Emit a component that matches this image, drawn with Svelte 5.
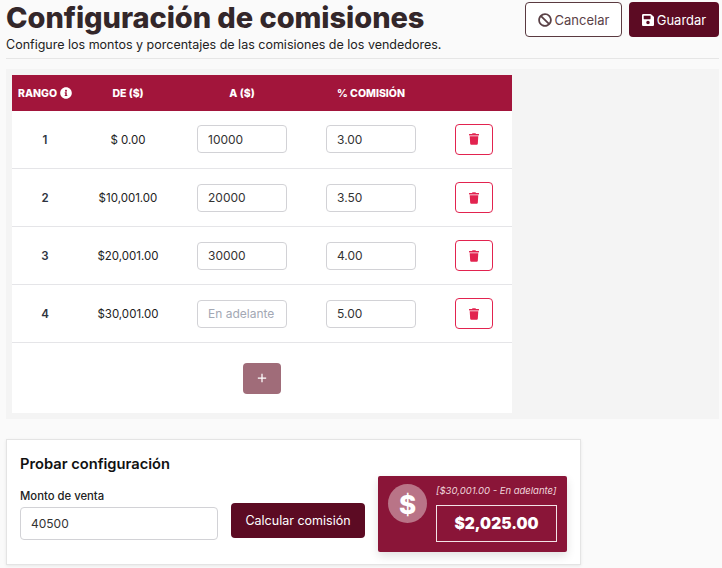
<script>
  const rows = [
    { id: 1, from: '$ 0.00', to: '10000', pct: '3.00' },
    { id: 2, from: '$10,001.00', to: '20000', pct: '3.50' },
    { id: 3, from: '$20,001.00', to: '30000', pct: '4.00' },
    { id: 4, from: '$30,001.00', to: '', pct: '5.00' }
  ];
</script>

<div class="page">
  <header class="head">
    <div class="titles">
      <h1>Configuración de comisiones</h1>
      <p>Configure los montos y porcentajes de las comisiones de los vendedores.</p>
    </div>
    <div class="actions">
      <button class="btn outline">
        <svg viewBox="0 0 512 512" width="14" height="14"><path fill="currentColor" d="M256 8C119 8 8 119 8 256s111 248 248 248 248-111 248-248S393 8 256 8zm130 116c65.500 65.500 70 165 20.100 235.600L152.400 105.900C223 56 322.500 58.500 386 124zM126 388c-65.500-65.500-70-165-20.100-235.600l253.700 253.700C289 456 189.500 453.500 126 388z"/></svg>
        Cancelar
      </button>
      <button class="btn solid">
        <svg viewBox="0 0 448 512" width="12" height="14"><path fill="currentColor" d="M433.900 129.900l-83.900-83.900A48 48 0 0 0 316.100 32H48C21.500 32 0 53.500 0 80v352c0 26.500 21.500 48 48 48h352c26.500 0 48-21.500 48-48V163.900a48 48 0 0 0-14.100-34zM224 416c-35.300 0-64-28.700-64-64s28.700-64 64-64 64 28.700 64 64-28.700 64-64 64zm96-304.500V212c0 6.600-5.400 12-12 12H76c-6.600 0-12-5.400-12-12V108c0-6.600 5.400-12 12-12h228.500c3.200 0 6.200 1.300 8.500 3.500l3.500 3.500c2.300 2.300 3.500 5.300 3.500 8.500z"/></svg>
        Guardar
      </button>
    </div>
  </header>

  <section class="panel">
    <div class="table">
      <div class="row thead">
        <div class="rango">RANGO
          <svg viewBox="0 0 512 512" width="12" height="12"><path fill="currentColor" d="M256 8C119 8 8 119 8 256c0 137 111 248 248 248s248-111 248-248C504 119 393 8 256 8zm0 110c23.200 0 42 18.800 42 42s-18.800 42-42 42-42-18.800-42-42 18.800-42 42-42zm56 254c0 6.600-5.400 12-12 12h-88c-6.600 0-12-5.400-12-12v-24c0-6.600 5.400-12 12-12h12v-64h-12c-6.600 0-12-5.400-12-12v-24c0-6.600 5.400-12 12-12h64c6.600 0 12 5.400 12 12v100h12c6.600 0 12 5.400 12 12v24z"/></svg>
        </div>
        <div>DE ($)</div>
        <div>A ($)</div>
        <div>% COMISIÓN</div>
        <div></div>
      </div>
      {#each rows as r}
        <div class="row tr">
          <div class="num">{r.id}</div>
          <div class="from">{r.from}</div>
          <div><input class="inp" value={r.to} placeholder="En adelante" /></div>
          <div><input class="inp" value={r.pct} /></div>
          <div>
            <button class="del" aria-label="Eliminar">
              <svg viewBox="0 0 448 512" width="10" height="12"><path fill="currentColor" d="M432 32H312l-9.400-18.700A24 24 0 0 0 281.100 0H166.800a23.700 23.700 0 0 0-21.400 13.300L136 32H16A16 16 0 0 0 0 48v32a16 16 0 0 0 16 16h416a16 16 0 0 0 16-16V48a16 16 0 0 0-16-16zM53.200 467a48 48 0 0 0 47.900 45h245.800a48 48 0 0 0 47.900-45L416 128H32z"/></svg>
            </button>
          </div>
        </div>
      {/each}
      <div class="addrow">
        <button class="add" aria-label="Agregar">
          <svg viewBox="0 0 12 12" width="10" height="10"><path d="M6 1v10M1 6h10" stroke="currentColor" stroke-width="1.500" fill="none"/></svg>
        </button>
      </div>
    </div>
  </section>

  <section class="card">
    <h2>Probar configuración</h2>
    <div class="test">
      <div class="field">
        <label for="monto">Monto de venta</label>
        <input id="monto" class="inp big" value="40500" />
      </div>
      <button class="btn solid calc">Calcular comisión</button>
      <div class="result">
        <div class="coin">$</div>
        <div class="res-body">
          <div class="range">[$30,001.00 - En adelante]</div>
          <div class="amount">$2,025.00</div>
        </div>
      </div>
    </div>
  </section>
</div>

<style>
  :global(body) {
    margin: 0;
    background: #fafafa;
    font-family: Inter, "Noto Sans", sans-serif;
    color: #2d2327;
  }
  .page {
    width: 722px;
    height: 568px;
    overflow: hidden;
    box-sizing: border-box;
    padding: 2px 3px 0 6px;
  }
  .head {
    display: flex;
    justify-content: space-between;
    align-items: flex-start;
    height: 56px;
    border-bottom: 1px solid #e6e6e6;
    box-sizing: content-box;
  }
  h1 {
    margin: -1px 0 0;
    font-size: 29px;
    line-height: 34px;
    font-weight: 800;
    color: #33272a;
    letter-spacing: -0.06px;
    white-space: nowrap;
  }
  .titles p {
    margin: 2px 0 0;
    font-size: 12.500px;
    line-height: 15px;
    color: #222;
  }
  .actions {
    display: flex;
    gap: 7px;
  }
  .btn {
    height: 35px;
    box-sizing: border-box;
    border-radius: 4px;
    font: 400 13px Inter, sans-serif;
    display: flex;
    align-items: center;
    justify-content: center;
    gap: 3px;
    padding: 0;
    cursor: pointer;
  }
  .outline {
    width: 97px;
    background: #fff;
    border: 1px solid #5a3a40;
    color: #5a4146;
  }
  .solid {
    width: 90px;
    background: #5c0b23;
    border: none;
    color: #fff;
  }
  .panel {
    margin-top: 10px;
    background: #f4f4f4;
    padding: 6px;
    height: 350px;
    box-sizing: border-box;
  }
  .table {
    width: 500px;
    height: 338px;
    background: #fff;
  }
  .row {
    display: grid;
    grid-template-columns: 66px 100px 128px 130px 76px;
    align-items: center;
    justify-items: center;
  }
  .thead {
    height: 35.900px;
    box-sizing: border-box;
    padding-top: 1px;
    background: #a2153b;
    color: #fff;
    font-size: 10.500px;
    font-weight: 800;
  }
  .rango {
    display: flex;
    align-items: center;
    gap: 3px;
  }
  .tr {
    height: 57.100px;
    border-bottom: 1px solid #e5e5e8;
    box-sizing: content-box;
    font-size: 11.500px;
    line-height: 13px;
    color: #222;
  }
  .num, .from {
    padding-top: 2px;
  }
  .num {
    font-weight: 600;
    color: #2e3440;
  }
  .inp {
    width: 90px;
    height: 28px;
    box-sizing: border-box;
    border: 1px solid #d2d2d6;
    border-radius: 4px;
    padding: 0 10px;
    font: 400 12px Inter, sans-serif;
    color: #333;
    background: #fff;
    display: block;
  }
  .inp::placeholder {
    color: #a3a8b4;
  }
  .del {
    width: 38px;
    height: 31px;
    background: #fff;
    border: 1px solid #e2234f;
    border-radius: 4px;
    color: #e2234f;
    padding: 0;
    display: flex;
    align-items: center;
    justify-content: center;
  }
  .addrow {
    display: flex;
    justify-content: center;
    padding: 19.700px 0 0 0;
  }
  .add {
    width: 38px;
    height: 31px;
    border: none;
    border-radius: 4px;
    background: #a06c79;
    color: #fff;
    padding: 0;
    display: flex;
    align-items: center;
    justify-content: center;
  }
  .card {
    margin-top: 20px;
    width: 575px;
    height: 126px;
    box-sizing: border-box;
    background: #fff;
    border: 1px solid #e4e4e4;
    box-shadow: 0 1px 3px rgba(0, 0, 0, 0.08);
    padding: 14px 13px;
  }
  h2 {
    margin: 0;
    font-size: 14.700px;
    line-height: 20px;
    font-weight: 600;
    color: #111;
  }
  .test {
    display: flex;
    align-items: flex-start;
  }
  .field {
    margin-top: 15px;
    width: 198px;
  }
  label {
    display: block;
    font-size: 11.300px;
    font-weight: 500;
    line-height: 14px;
    color: #222;
    margin-bottom: 4px;
  }
  .big {
    width: 198px;
    height: 33px;
  }
  .calc {
    width: 134px;
    margin: 29px 0 0 13px;
    font-size: 12.500px;
  }
  .result {
    margin: 2px 0 0 13px;
    width: 189px;
    height: 76px;
    box-sizing: border-box;
    background: #8a1538;
    border-radius: 2px;
    box-shadow: 0 4px 10px rgba(0, 0, 0, 0.12);
    display: flex;
    padding: 8px 10px;
    color: #fff;
    gap: 9px;
  }
  .coin {
    width: 39px;
    height: 39px;
    flex: none;
    border-radius: 50%;
    background: #b97487;
    display: flex;
    align-items: center;
    justify-content: center;
    font-size: 26px;
    font-weight: 800;
    padding-top: 1px;
    box-sizing: border-box;
  }
  .res-body {
    flex: 1;
  }
  .range {
    font-size: 9.500px;
    font-style: italic;
    line-height: 14px;
    color: #f0d5dc;
    white-space: nowrap;
  }
  .amount {
    margin-top: 7px;
    height: 37px;
    box-sizing: border-box;
    border: 1px solid #f3e3e7;
    display: flex;
    align-items: center;
    justify-content: center;
    font-size: 15.500px;
    font-weight: 900;
  }
</style>
